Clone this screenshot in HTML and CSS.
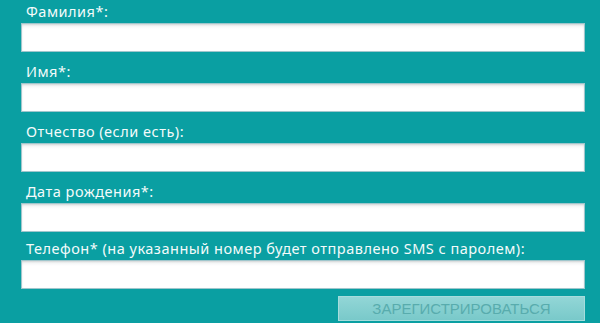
FILE: index.html
```html
<!DOCTYPE html>
<html lang="ru">
<head>
    <meta charset="UTF-8">
    <meta name="viewport" content="width=device-width, initial-scale=1.0">
    <title>Регистрация</title>
    <link rel="stylesheet" href="styles.css">
</head>
<body>
    <form class="reg-form">
        <div class="field">
            <label class="field-label">Фамилия*:</label>
            <input class="field-input" type="text">
        </div>
        <div class="field">
            <label class="field-label">Имя*:</label>
            <input class="field-input" type="text">
        </div>
        <div class="field">
            <label class="field-label">Отчество (если есть):</label>
            <input class="field-input" type="text">
        </div>
        <div class="field">
            <label class="field-label">Дата рождения*:</label>
            <input class="field-input" type="text">
        </div>
        <div class="field field-phone">
            <label class="field-label">Телефон* (на указанный номер будет отправлено SMS с паролем):</label>
            <input class="field-input" type="text">
        </div>
        <div class="actions">
            <button class="submit-btn" type="button" disabled>ЗАРЕГИСТРИРОВАТЬСЯ</button>
        </div>
    </form>
</body>
</html>
```

FILE: styles.css
```css
body {
    margin: 0;
    background-color: #0a9fa2;
    font-family: 'Noto Sans', 'DejaVu Sans', sans-serif;
}

.reg-form {
    width: 564px;
    padding: 0 15px 0 21px;
}

.field {
    display: flex;
    flex-direction: column;
    margin-bottom: 8px;
}

.field-label {
    height: 23px;
    line-height: 22px;
    padding-left: 5px;
    color: #f4fbfb;
    font-size: 14.5px;
    letter-spacing: 0.5px;
}

.field-phone {
    margin-top: -3px;
}

.field-input {
    box-sizing: border-box;
    height: 29px;
    width: 100%;
    margin: 0;
    border: 1px solid #9fc6cc;
    background: linear-gradient(#eef1f2, #ffffff 5px);
    box-shadow: inset 0 1px 2px rgba(0, 0, 0, 0.12);
    outline: none;
}

.actions {
    display: flex;
    justify-content: flex-end;
    margin-top: -1px;
}

.submit-btn {
    box-sizing: border-box;
    width: 247px;
    height: 25px;
    border: 1px solid #a6dcdc;
    background: linear-gradient(#92d6d6, #79c9ca);
    color: #58acad;
    font-family: 'Liberation Sans', Arial, sans-serif;
    font-size: 15px;
    padding: 0;
}
```
